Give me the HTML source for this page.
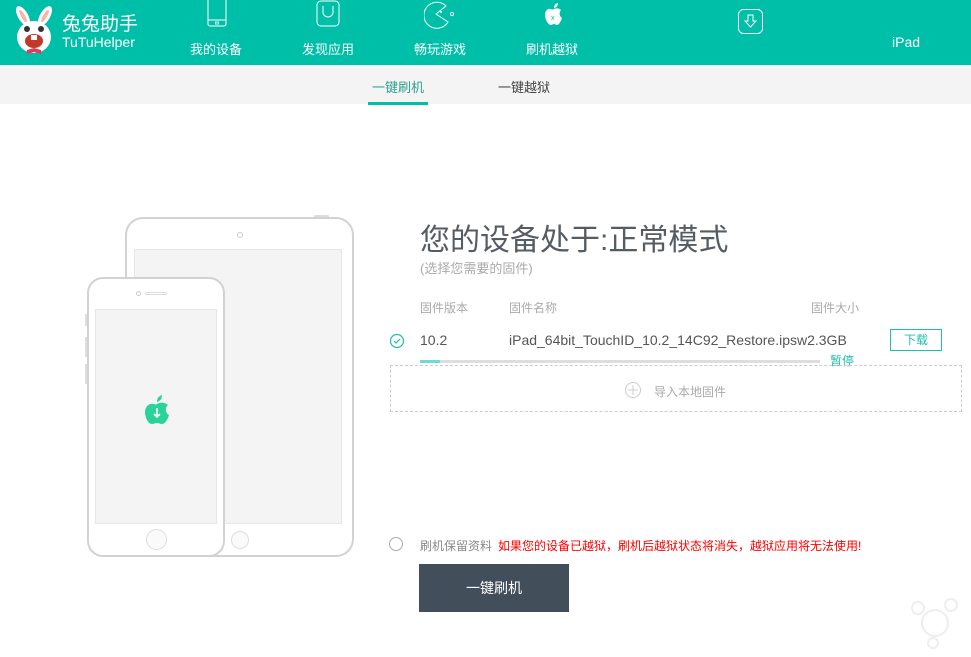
<!DOCTYPE html>
<html><head><meta charset="utf-8"><style>
*{margin:0;padding:0;box-sizing:border-box}
body{width:971px;height:657px;position:relative;background:#fff;font-family:"Liberation Sans","Noto Sans CJK SC",sans-serif;overflow:hidden}
.a{position:absolute;white-space:nowrap}
.hdr{position:absolute;left:0;top:0;width:971px;height:65px;background:#00bfa8}
.nav{color:#fff;font-size:13px;top:39px}
.sub{position:absolute;left:0;top:65px;width:971px;height:39px;background:#f4f4f4}
</style></head><body>
<div class="hdr"></div>
<svg class="a" style="left:12px;top:3px" width="46" height="52" viewBox="0 0 46 52">
<ellipse cx="11" cy="13" rx="5" ry="11" fill="#fff" transform="rotate(-30 11 13)"/>
<ellipse cx="33" cy="13" rx="5" ry="11" fill="#fff" transform="rotate(30 33 13)"/>
<ellipse cx="11" cy="13" rx="2" ry="7" fill="#f5b6a8" transform="rotate(-30 11 13)"/>
<ellipse cx="33" cy="13" rx="2" ry="7" fill="#f5b6a8" transform="rotate(30 33 13)"/>
<ellipse cx="22" cy="34" rx="17" ry="16" fill="#fff"/>
<circle cx="15" cy="26" r="3" fill="#333"/><circle cx="29" cy="26" r="3" fill="#333"/>
<ellipse cx="22" cy="38" rx="9" ry="7" fill="#c0392b"/>
<rect x="19" y="32" width="6" height="5" fill="#fff"/>
<path d="M15 47l7 -2l7 2l0 4l-7-2l-7 2z" fill="#e8365d"/>
</svg>
<div class="a" style="left:62px;top:9px;color:#fff;font-size:19px">兔兔助手</div>
<div class="a" style="left:62px;top:34px;color:#fff;font-size:14px">TuTuHelper</div>
<svg class="a" style="left:207px;top:0" width="22" height="28"><rect x="1" y="-3" width="18" height="29" rx="2" fill="none" stroke="#fff" stroke-width="1"/><line x1="1" y1="20" x2="19" y2="20" stroke="#fff"/><rect x="8.5" y="22" width="3" height="2" fill="none" stroke="#fff" stroke-width="0.8"/></svg>
<svg class="a" style="left:316px;top:0" width="26" height="28"><rect x="1" y="1" width="22" height="25" rx="4" fill="none" stroke="#fff"/><path d="M7 6v6a5 5 0 0 0 10 0v-6" fill="none" stroke="#fff"/></svg>
<svg class="a" style="left:424px;top:0" width="30" height="30"><path d="M22 6A13 13 0 1 0 24 22L12 14Z" fill="none" stroke="#fff"/><circle cx="17" cy="12" r="1" fill="#fff"/><circle cx="28" cy="14" r="1.6" fill="none" stroke="#fff"/></svg>
<svg class="a" style="left:541px;top:0" width="26" height="30"><path d="M13 9c2-1 5-1 7 1c-2 2-2 6 1 8c-1 3-3 7-5 7c-1 0-2-1-3-1s-2 1-3 1c-3 0-6-6-6-10c0-4 3-7 5-6c1 0 3 1 4 0z" fill="#fff"/><path d="M13 8c0-3 2-5 4-5c0 3-2 5-4 5z" fill="#fff"/><text x="10" y="20" font-size="7" fill="#00bfa8" font-family="Liberation Sans">x</text></svg>
<svg class="a" style="left:738px;top:9px" width="26" height="26"><rect x="0.5" y="0.5" width="24" height="24" rx="5" fill="none" stroke="#fff"/><path d="M10 6h5v6h3l-5.5 6l-5.5-6h3z" fill="none" stroke="#fff"/></svg>
<div class="a nav" style="left:190px">我的设备</div>
<div class="a nav" style="left:302px">发现应用</div>
<div class="a nav" style="left:414px">畅玩游戏</div>
<div class="a nav" style="left:526px">刷机越狱</div>
<div class="a" style="left:892px;top:34px;color:#fff;font-size:14px">iPad</div>
<div class="sub"></div>
<div class="a" style="left:372px;top:77px;font-size:13px;color:#2c9f90">一键刷机</div>
<div class="a" style="left:368px;top:102px;width:60px;height:3px;background:#00bfa8"></div>
<div class="a" style="left:498px;top:77px;font-size:13px;color:#444">一键越狱</div>
<div class="a" style="left:314px;top:215px;width:15px;height:3px;background:#ddd;border-radius:1px"></div>
<div class="a" style="left:125px;top:217px;width:229px;height:340px;border:2px solid #d2d2d2;border-radius:18px;background:#fff"></div>
<div class="a" style="left:134px;top:249px;width:208px;height:275px;background:#f4f4f4;border:1px solid #e6e6e6"></div>
<div class="a" style="left:237px;top:232px;width:6px;height:6px;border:1px solid #ccc;border-radius:50%"></div>
<div class="a" style="left:231px;top:531px;width:18px;height:18px;border:1px solid #ddd;border-radius:50%;background:#fafafa"></div>
<div class="a" style="left:85px;top:314px;width:3px;height:12px;background:#ddd"></div>
<div class="a" style="left:85px;top:337px;width:3px;height:20px;background:#ddd"></div>
<div class="a" style="left:85px;top:364px;width:3px;height:20px;background:#ddd"></div>
<div class="a" style="left:87px;top:277px;width:138px;height:280px;border:2px solid #d2d2d2;border-radius:16px;background:#fff"></div>
<div class="a" style="left:95px;top:309px;width:122px;height:215px;background:#f4f4f4;border:1px solid #e6e6e6"></div>
<div class="a" style="left:136px;top:291px;width:5px;height:5px;border:1px solid #ccc;border-radius:50%"></div>
<div class="a" style="left:145px;top:292px;width:22px;height:3px;border:1px solid #ddd;border-radius:2px"></div>
<div class="a" style="left:146px;top:529px;width:21px;height:21px;border:1px solid #ddd;border-radius:50%;background:#fafafa"></div>
<svg class="a" style="left:141px;top:393px" width="32" height="40"><path d="M16 11c3-2 8-2 11 1c-3 2-3 8 1 10c-1 4-4 9-7 9c-2 0-3-1-5-1s-3 1-5 1c-4 0-7-7-7-12c0-6 5-9 8-8c2 0 3 1 4 0z" fill="#2ad39a"/><path d="M16 9c0-4 2-6 5-7c0 4-2 6-5 7z" fill="#2ad39a"/><path d="M16 15v9M13 21l3 3l3-3" stroke="#fff" stroke-width="1.6" fill="none"/></svg>
<div class="a" style="left:420px;top:215px;font-size:30px;color:#555c63">您的设备处于:正常模式</div>
<div class="a" style="left:420px;top:258px;font-size:13px;color:#aaa">(选择您需要的固件)</div>
<div class="a" style="left:420px;top:299px;font-size:12px;color:#aaa">固件版本</div>
<div class="a" style="left:509px;top:299px;font-size:12px;color:#aaa">固件名称</div>
<div class="a" style="left:811px;top:299px;font-size:12px;color:#aaa">固件大小</div>
<svg class="a" style="left:389px;top:333px" width="16" height="16"><circle cx="8" cy="8" r="6.5" fill="none" stroke="#1fbfa8" stroke-width="1.2"/><path d="M5 8l2 2l4-4" fill="none" stroke="#1fbfa8" stroke-width="1.2"/></svg>
<div class="a" style="left:420px;top:332px;font-size:14px;color:#555">10.2</div>
<div class="a" style="left:509px;top:332px;font-size:14px;color:#555">iPad_64bit_TouchID_10.2_14C92_Restore.ipsw2.3GB</div>
<div class="a" style="left:890px;top:329px;width:52px;height:22px;border:1px solid #1fbfa8;color:#1fbfa8;font-size:12px;text-align:center;line-height:20px">下载</div>
<div class="a" style="left:420px;top:360px;width:400px;height:3px;background:#ddd"></div>
<div class="a" style="left:420px;top:360px;width:20px;height:3px;background:#6fdccf"></div>
<div class="a" style="left:830px;top:352px;font-size:12px;color:#1fbfa8">暂停</div>
<div class="a" style="left:390px;top:365px;width:572px;height:47px;border:1px dashed #ccc"></div>
<svg class="a" style="left:624px;top:381px" width="18" height="18"><circle cx="9" cy="9" r="7.5" fill="none" stroke="#ccc"/><path d="M9 4v10M4 9h10" stroke="#ccc"/></svg>
<div class="a" style="left:654px;top:383px;font-size:12px;color:#aaa">导入本地固件</div>
<div class="a" style="left:389px;top:537px;width:14px;height:14px;border:1px solid #aaa;border-radius:50%"></div>
<div class="a" style="left:420px;top:537px;font-size:12px;color:#888">刷机保留资料</div>
<div class="a" style="left:498px;top:537px;font-size:12px;color:#f00">如果您的设备已越狱，刷机后越狱状态将消失，越狱应用将无法使用!</div>
<div class="a" style="left:419px;top:564px;width:150px;height:48px;background:#424e5a;color:#fff;font-size:14px;text-align:center;line-height:48px">一键刷机</div>
<svg class="a" style="left:905px;top:595px" width="60" height="55"><g fill="none" stroke="#eee" stroke-width="2"><circle cx="13" cy="13" r="6"/><circle cx="46" cy="10" r="6"/><circle cx="30" cy="28" r="13"/><circle cx="28" cy="48" r="5"/></g></svg>
</body></html>
